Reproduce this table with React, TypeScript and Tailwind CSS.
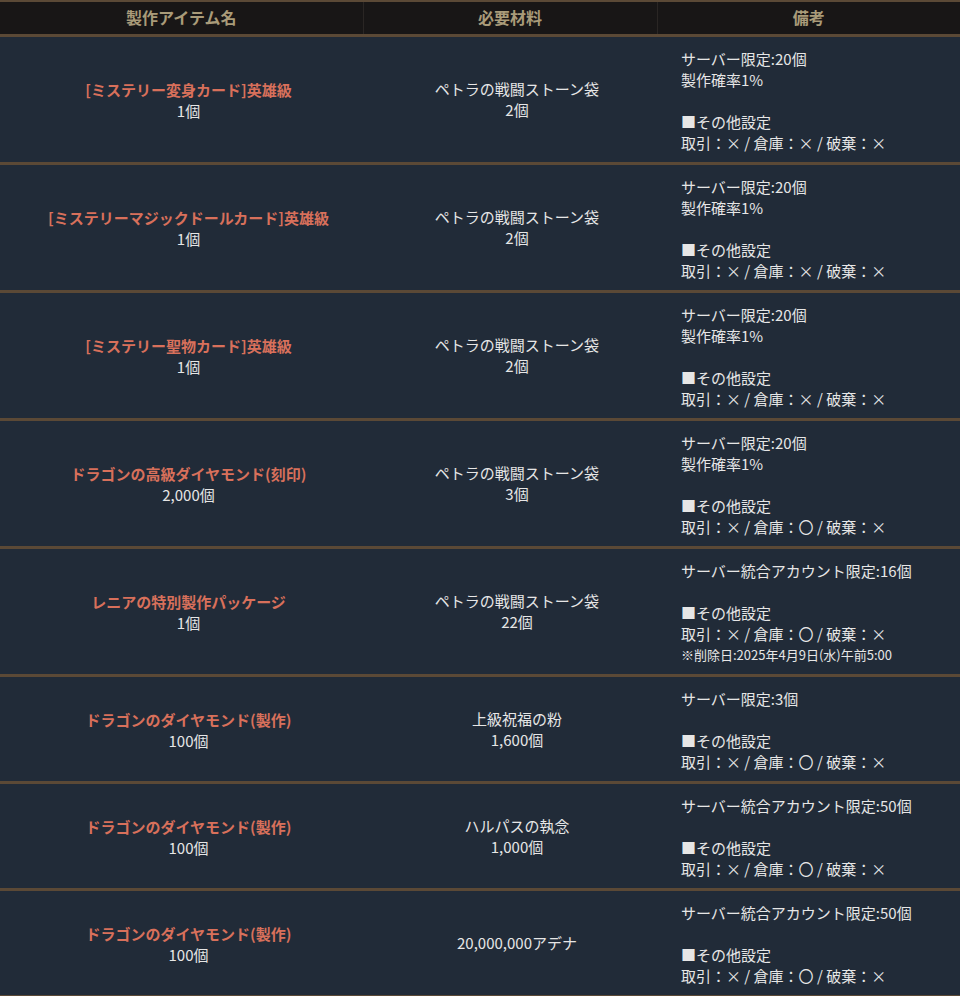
type Row = {
  name: string;
  qty: string;
  material: string[];
  notes: string[];
  trade: string;
  deleteDate?: string;
};

const rows: Row[] = [
  {
    name: '[ミステリー変身カード]英雄級',
    qty: '1個',
    material: ['ペトラの戦闘ストーン袋', '2個'],
    notes: ['サーバー限定:20個', '製作確率1%'],
    trade: '取引：× / 倉庫：× / 破棄：×',
  },
  {
    name: '[ミステリーマジックドールカード]英雄級',
    qty: '1個',
    material: ['ペトラの戦闘ストーン袋', '2個'],
    notes: ['サーバー限定:20個', '製作確率1%'],
    trade: '取引：× / 倉庫：× / 破棄：×',
  },
  {
    name: '[ミステリー聖物カード]英雄級',
    qty: '1個',
    material: ['ペトラの戦闘ストーン袋', '2個'],
    notes: ['サーバー限定:20個', '製作確率1%'],
    trade: '取引：× / 倉庫：× / 破棄：×',
  },
  {
    name: 'ドラゴンの高級ダイヤモンド(刻印)',
    qty: '2,000個',
    material: ['ペトラの戦闘ストーン袋', '3個'],
    notes: ['サーバー限定:20個', '製作確率1%'],
    trade: '取引：× / 倉庫：〇 / 破棄：×',
  },
  {
    name: 'レニアの特別製作パッケージ',
    qty: '1個',
    material: ['ペトラの戦闘ストーン袋', '22個'],
    notes: ['サーバー統合アカウント限定:16個'],
    trade: '取引：× / 倉庫：〇 / 破棄：×',
    deleteDate: '※削除日:2025年4月9日(水)午前5:00',
  },
  {
    name: 'ドラゴンのダイヤモンド(製作)',
    qty: '100個',
    material: ['上級祝福の粉', '1,600個'],
    notes: ['サーバー限定:3個'],
    trade: '取引：× / 倉庫：〇 / 破棄：×',
  },
  {
    name: 'ドラゴンのダイヤモンド(製作)',
    qty: '100個',
    material: ['ハルパスの執念', '1,000個'],
    notes: ['サーバー統合アカウント限定:50個'],
    trade: '取引：× / 倉庫：〇 / 破棄：×',
  },
  {
    name: 'ドラゴンのダイヤモンド(製作)',
    qty: '100個',
    material: ['20,000,000アデナ'],
    notes: ['サーバー統合アカウント限定:50個'],
    trade: '取引：× / 倉庫：〇 / 破棄：×',
  },
];

const font = { fontFamily: '"Noto Sans CJK JP", "Noto Sans", sans-serif' };

export default function App() {
  return (
    <div className="w-[960px] min-h-[996px] bg-[#212b38]" style={font}>
      <table className="w-full table-fixed border-collapse text-[15px] leading-[21px] text-[#e6e6e6]">
        <colgroup>
          <col className="w-[363px]" />
          <col className="w-[294px]" />
          <col />
        </colgroup>
        <thead>
          <tr className="border-t-2 border-b-[3px] border-[#5b4936] bg-[#181616] text-[16px] font-bold text-[#a99b79]">
            <th className="h-[34px] border-r border-[#2a2624] text-center">製作アイテム名</th>
            <th className="border-r border-[#2a2624] text-center">必要材料</th>
            <th className="text-center">備考</th>
          </tr>
        </thead>
        <tbody>
          {rows.map((r, i) => (
            <tr key={i} className="border-b-[3px] border-[#5b4936]">
              <td className="pt-[11px] pb-[9px] pl-[24px] pr-[10px] text-center align-middle">
                <div className="font-bold text-[#d8705b]">{r.name}</div>
                <div>{r.qty}</div>
              </td>
              <td className="pl-[24px] pr-[10px] text-center align-middle">
                {r.material.map((m, j) => (
                  <div key={j}>{m}</div>
                ))}
              </td>
              <td className="pt-[11px] pb-[9px] pl-[24px] pr-[10px] text-left align-middle">
                {r.notes.map((n, j) => (
                  <div key={j}>{n}</div>
                ))}
                <div className="h-[21px]" />
                <div>■その他設定</div>
                <div>{r.trade}</div>
                {r.deleteDate && <div className="text-[13px]">{r.deleteDate}</div>}
              </td>
            </tr>
          ))}
        </tbody>
      </table>
    </div>
  );
}
